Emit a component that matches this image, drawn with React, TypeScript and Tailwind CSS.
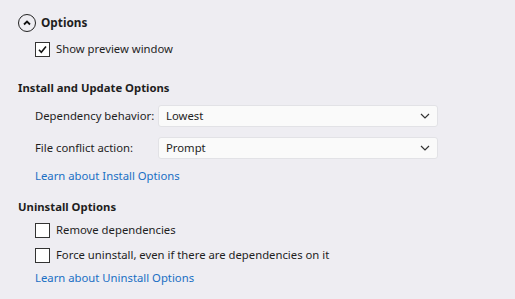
import React from "react";

function Check({ checked }: { checked?: boolean }) {
  return (
    <div className="flex h-[15px] w-[15px] shrink-0 items-center justify-center border border-[#333] bg-white">
      {checked && (
        <svg width="11" height="11" viewBox="0 0 11 11">
          <path d="M2 5.8 L4.3 8.3 L9 2.5" fill="none" stroke="#111" strokeWidth="1.6" />
        </svg>
      )}
    </div>
  );
}

function CheckRow({ label, checked, className }: { label: string; checked?: boolean; className?: string }) {
  return (
    <div className={`flex h-[20px] items-center gap-[6px] pl-[17px] ${className ?? ""}`}>
      <Check checked={checked} />
      <span className="whitespace-nowrap">{label}</span>
    </div>
  );
}

function SelectRow({ label, value, className }: { label: string; value: string; className?: string }) {
  return (
    <div className={`flex h-[22px] items-center pl-[17px] ${className ?? ""}`}>
      <div className="w-[123px] whitespace-nowrap">{label}</div>
      <div className="flex h-[22px] w-[280px] items-center justify-between rounded-[3px] border border-[#e2e2e6] bg-[#fafafa] pl-[7px] pr-[7px]">
        <span>{value}</span>
        <svg width="10" height="6" viewBox="0 0 10 6">
          <path d="M1 1 L5 5 L9 1" fill="none" stroke="#333" strokeWidth="1.2" />
        </svg>
      </div>
    </div>
  );
}

export default function App() {
  return (
    <div
      className="h-[299px] w-[515px] overflow-hidden bg-[#eeedf2] pl-[18px] pt-[13px] text-[11.3px] text-[#1e1e1e]"
      style={{ fontFamily: '"Noto Sans", sans-serif' }}
    >
      <div className="flex h-[20px] items-center gap-[5px] font-bold">
        <div className="flex h-[18px] w-[18px] items-center justify-center rounded-full border-[1.5px] border-[#222]">
          <svg width="8" height="6" viewBox="0 0 8 6">
            <path d="M1 4.5 L4 1.5 L7 4.5" fill="none" stroke="#111" strokeWidth="1.8" />
          </svg>
        </div>
        <span className="text-[11.8px]">Options</span>
      </div>
      <CheckRow label="Show preview window" checked className="mt-[6px]" />

      <div className="mt-[19px] flex h-[20px] items-center font-bold">Install and Update Options</div>
      <SelectRow label="Dependency behavior:" value="Lowest" className="mt-[7px]" />
      <SelectRow label="File conflict action:" value="Prompt" className="mt-[10px]" />
      <div className="mt-[7px] flex h-[20px] items-center pl-[17px] text-[#1a6fc4]">Learn about Install Options</div>

      <div className="mt-[11px] flex h-[20px] items-center font-bold">Uninstall Options</div>
      <CheckRow label="Remove dependencies" className="mt-[3px]" />
      <CheckRow label="Force uninstall, even if there are dependencies on it" className="mt-[5px]" />
      <div className="mt-[3px] flex h-[20px] items-center pl-[17px] text-[#1a6fc4]">Learn about Uninstall Options</div>
    </div>
  );
}
